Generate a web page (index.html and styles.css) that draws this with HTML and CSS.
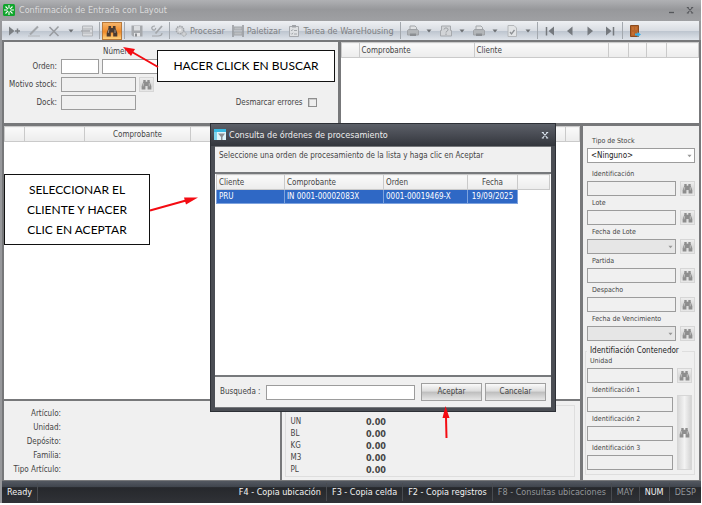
FILE: index.html
```html
<!DOCTYPE html>
<html lang="es">
<head>
<meta charset="utf-8">
<title>Confirmación de Entrada con Layout</title>
<link rel="stylesheet" href="styles.css">
</head>
<body>
<svg class="defs" aria-hidden="true">
  <symbol id="binoculars" viewBox="0 0 12 12"><path d="M2.5 1h2.6v2h1.8V1h2.6v2l1.8 5v3.5H7.2V7.500H4.800v4H.7V8l1.800-5z" fill="currentColor"/><path d="M2.900 4.500L2.300 8M9 4.500V8" stroke="#fff" stroke-opacity=".45" fill="none"/></symbol>
  <symbol id="printer" viewBox="0 0 12 12"><path d="M3 1h5l1.500 1.500V5H3z" fill="#e0e2e4" stroke="#a3a6aa"/><path d="M.5 5.500l1-1h9l1 1V10h-11z" fill="#b2b5b8" stroke="#a0a3a7"/><path d="M3 8.500h6V11H3z" fill="#8b8e92"/></symbol>
  <symbol id="caret" viewBox="0 0 6 4"><path d="M.5.5h5L3 3.500z" fill="currentColor"/></symbol>
</svg>
<div class="app">
  <header class="titlebar">
    <svg class="icon" viewBox="0 0 12 12"><rect width="12" height="12" rx="1.500" fill="#10a52c"/><path d="M6 1v3.500M6 7.500V11M1 6h3.500M7.500 6H11M2.500 2.500l2.300 2.300M7.200 7.200l2.300 2.300M9.500 2.500L7.200 4.800M4.800 7.200L2.500 9.500" stroke="#fff" stroke-width="1.100"/></svg>
    <h1>Confirmación de Entrada con Layout</h1>
    <button class="win" aria-label="Minimizar"><svg viewBox="0 0 8 8"><path d="M1 6.500h5" stroke="currentColor" stroke-width="1.300"/></svg></button>
    <button class="win" aria-label="Cerrar"><svg viewBox="0 0 8 8"><path d="M1.500 1.500l5 5.500M6.500 1.500l-5 5.500M.8 1.500h2M5.200 1.500h2M.8 7h2M5.200 7h2" stroke="currentColor" stroke-width="1.100"/></svg></button>
  </header>
  <nav class="toolbar" aria-label="Herramientas">
    <button aria-label="Nuevo"><svg class="icon" viewBox="0 0 12 12"><path d="M1 1.500L6.500 6 1 10.500z" fill="#7b7f83"/><path d="M7 6h5M9.500 3.500v5" stroke="#7b7f83" stroke-width="1.500"/></svg></button>
    <button aria-label="Editar"><svg class="icon" viewBox="0 0 12 12"><path d="M2 9.500L10 1.500" stroke="#a3a6aa" stroke-width="2"/><path d="M0 11h12" stroke="#b3b6ba"/></svg></button>
    <button aria-label="Eliminar"><svg class="icon" viewBox="0 0 12 12"><path d="M1.500 2l9 9M10.500 1.500l-9 9.500" stroke="#999ca0" stroke-width="1.500"/></svg></button>
    <button class="drop" aria-label="Opciones de eliminar"><svg><use href="#caret"/></svg></button>
    <button aria-label="Lista"><svg class="icon" viewBox="0 0 12 12"><path d="M1.500 1h10v10h-10z" fill="#d9dbde" stroke="#b0b3b7"/><path d="M1.500 4h10M1.500 8h10" stroke="#b0b3b7"/><path d="M0 6h9" stroke="#a6a9ad" stroke-width="1.500"/></svg></button>
    <span class="sep"></span>
    <button class="active" aria-label="Buscar"><svg class="icon"><use href="#binoculars"/></svg></button>
    <span class="sep"></span>
    <button aria-label="Guardar"><svg class="icon" viewBox="0 0 12 12"><path d="M.5.5h11v11H2l-1.500-1.500z" fill="#a5a8ac"/><path d="M3 1h6v4.500H3z" fill="#dcdee1"/><path d="M3 8h6v3.500H3z" fill="#e5e6e8"/><path d="M4 8.500h2v3H4z" fill="#8a8d91"/></svg></button>
    <button aria-label="Deshacer"><svg class="icon" viewBox="0 0 12 12"><path d="M4.500 8.500L11 1" stroke="#a3a6aa" stroke-width="1.800"/><path d="M4 1C1 1 0 3 1.500 4.500S5 4.500 4.500 3M1 11h6c3 0 4-1 4-3" stroke="#a3a6aa" fill="none" stroke-width="1.200"/></svg></button>
    <span class="sep"></span>
    <button class="text"><svg class="icon" viewBox="0 0 12 12"><circle cx="5" cy="5" r="3.700" fill="#cfd1d4" stroke="#a0a3a7" stroke-width="1.500" stroke-dasharray="1.500 .8"/><circle cx="5" cy="5" r="1.300" fill="#e7e8ea"/><circle cx="9" cy="9" r="2.200" fill="#cfd1d4" stroke="#a0a3a7" stroke-dasharray="1 .6"/></svg>Procesar</button>
    <button class="text"><svg class="icon" viewBox="0 0 12 12"><path d="M1 0v12M11 0v12" stroke="#94979b" stroke-width="1.500"/><path d="M2 2h8v3H2zM2 7h8v3H2z" fill="#bbbec1" stroke="#a3a6aa"/></svg>Paletizar</button>
    <button class="text"><svg class="icon" viewBox="0 0 12 12"><path d="M1.500 1.500h9v10h-9z" fill="#dfe1e3" stroke="#a6a9ad"/><path d="M4 0h4v2.500H4z" fill="#a0a3a7"/><path d="M3 5l.8.8L5 4.300M3 8.500l.8.8L5 7.800M6 5.500h3M6 9h3" stroke="#969a9e" stroke-width=".8" fill="none"/></svg>Tarea de WareHousing</button>
    <span class="sep"></span>
    <button aria-label="Imprimir"><svg class="icon"><use href="#printer"/></svg></button>
    <button class="drop" aria-label="Opciones de impresión"><svg><use href="#caret"/></svg></button>
    <button aria-label="Vista previa"><svg class="icon" viewBox="0 0 12 12"><path d="M1.500 1h9v4.500h1V11H.5V5.500h1z" fill="#d2d4d7" stroke="#a6a9ad"/><path d="M4 4.500c0-2 4-2 4 0S6 6 6 7.500M6 8.500V10" stroke="#999ca0" fill="none"/></svg></button>
    <button class="drop" aria-label="Opciones de vista previa"><svg><use href="#caret"/></svg></button>
    <button aria-label="Imprimir etiquetas"><svg class="icon"><use href="#printer"/></svg></button>
    <button class="drop" aria-label="Opciones de etiquetas"><svg><use href="#caret"/></svg></button>
    <button aria-label="Verificar"><svg class="icon" viewBox="0 0 12 12"><path d="M2 .5h6L10.500 3v8.500H2z" fill="#e2e4e6" stroke="#b4b7ba"/><path d="M4 7l1.500 2L8.500 5" stroke="#8e9195" stroke-width="1.300" fill="none"/></svg></button>
    <button class="drop" aria-label="Opciones de verificación"><svg><use href="#caret"/></svg></button>
    <span class="sep"></span>
    <button aria-label="Primero"><svg class="icon" viewBox="0 0 12 12"><path d="M2.500 2v8.500" stroke="#75797e" stroke-width="1.500"/><path d="M10 1.500v9L4.500 6z" fill="#75797e"/></svg></button>
    <button aria-label="Anterior"><svg class="icon" viewBox="0 0 12 12"><path d="M8.500 1.500v9L3 6z" fill="#75797e"/></svg></button>
    <button aria-label="Siguiente"><svg class="icon" viewBox="0 0 12 12"><path d="M3.500 1.500v9L9 6z" fill="#75797e"/></svg></button>
    <button aria-label="Último"><svg class="icon" viewBox="0 0 12 12"><path d="M9.500 2v8.500" stroke="#75797e" stroke-width="1.500"/><path d="M2 1.500v9L7.500 6z" fill="#75797e"/></svg></button>
    <span class="sep"></span>
    <button aria-label="Salir"><svg class="icon" viewBox="0 0 12 12"><path d="M1.500.5h8v11h-8z" fill="#b5652b" stroke="#8b4a1d"/><path d="M3 2h2v3H3zM6 2h2v3H6zM3 7h2v3H3z" fill="#c46f31"/><path d="M6 8.500h2.500V7L12 9.500 8.500 12v-1.500H6z" fill="#38aee8"/></svg></button>
  </nav>

  <main class="workspace">
    <div class="top">
      <form class="panel order">
        <span class="caption">Número</span>
        <label for="orden">Orden:</label>
        <span class="pair"><input id="orden"><input class="numero" aria-label="Número"></span>
        <label for="motivo">Motivo stock:</label>
        <span class="pair"><input id="motivo" class="off"><button type="button" class="find" aria-label="Buscar motivo"><svg class="icon"><use href="#binoculars"/></svg></button></span>
        <label for="dock">Dock:</label>
        <span class="pair"><input id="dock" class="off"><label class="check" for="errores">Desmarcar errores</label><input type="checkbox" id="errores"></span>
      </form>
      <section class="panel sheet">
        <table class="docs">
          <colgroup><col class="w-18"><col class="w-114"><col><col class="w-20"><col class="w-18"><col class="w-20"><col class="w-32"></colgroup>
          <thead><tr><th></th><th>Comprobante</th><th>Cliente</th><th></th><th></th><th></th><th></th></tr></thead>
        </table>
      </section>
    </div>
    <div class="bottom">
      <div class="left">
        <section class="panel sheet grow">
          <table class="lines">
            <colgroup><col class="w-20"><col class="w-60"><col class="w-106"><col><col class="w-14"></colgroup>
            <thead><tr><th></th><th></th><th>Comprobante</th><th></th><th></th></tr></thead>
          </table>
        </section>
        <div class="details">
          <section class="panel article"><p>Artículo:</p><p>Unidad:</p><p>Depósito:</p><p>Familia:</p><p>Tipo Artículo:</p></section>
          <section class="panel totals">
            <table>
              <tr><th>UN</th><td>0.00</td></tr>
              <tr><th>BL</th><td>0.00</td></tr>
              <tr><th>KG</th><td>0.00</td></tr>
              <tr><th>M3</th><td>0.00</td></tr>
              <tr><th>PL</th><td>0.00</td></tr>
            </table>
          </section>
        </div>
      </div>
      <aside class="panel filters">
        <div class="field wide"><label for="tipo">Tipo de Stock</label><span class="combo"><select id="tipo"><option>&lt;Ninguno&gt;</option></select><svg><use href="#caret"/></svg></span></div>
        <div class="field"><label for="ident">Identificación</label><input id="ident" class="off"><button class="find" aria-label="Buscar identificación"><svg class="icon"><use href="#binoculars"/></svg></button></div>
        <div class="field"><label for="lote">Lote</label><input id="lote" class="off"><button class="find" aria-label="Buscar lote"><svg class="icon"><use href="#binoculars"/></svg></button></div>
        <div class="field"><label for="flote">Fecha de Lote</label><span class="combo dim"><select id="flote"><option></option></select><svg><use href="#caret"/></svg></span><button class="find" aria-label="Buscar fecha de lote"><svg class="icon"><use href="#binoculars"/></svg></button></div>
        <div class="field"><label for="partida">Partida</label><input id="partida" class="off"><button class="find" aria-label="Buscar partida"><svg class="icon"><use href="#binoculars"/></svg></button></div>
        <div class="field"><label for="despacho">Despacho</label><input id="despacho" class="off"><button class="find" aria-label="Buscar despacho"><svg class="icon"><use href="#binoculars"/></svg></button></div>
        <div class="field"><label for="fvenc">Fecha de Vencimiento</label><span class="combo dim"><select id="fvenc"><option></option></select><svg><use href="#caret"/></svg></span><button class="find" aria-label="Buscar fecha de vencimiento"><svg class="icon"><use href="#binoculars"/></svg></button></div>
        <fieldset>
          <legend>Identifiación Contenedor</legend>
          <div class="field unit"><label for="unidad">Unidad</label><input id="unidad" class="off"><button class="find" aria-label="Buscar unidad"><svg class="icon"><use href="#binoculars"/></svg></button></div>
          <div class="ids">
            <div class="stack">
              <label for="id1">Identificación 1</label><input id="id1" class="off">
              <label for="id2">Identificación 2</label><input id="id2" class="off">
              <label for="id3">Identificación 3</label><input id="id3" class="off">
            </div>
            <button class="find tall" aria-label="Buscar contenedor"><svg class="icon"><use href="#binoculars"/></svg></button>
          </div>
        </fieldset>
      </aside>
    </div>
  </main>

  <footer class="status">
    <span class="ready">Ready</span>
    <span class="first">F4 - Copia ubicación</span><span>F3 - Copia celda</span><span>F2 - Copia registros</span><span class="mute">F8 - Consultas ubicaciones</span><span class="mute">MAY</span><span>NUM</span><span class="mute">DESP</span>
  </footer>

  <div class="dialog" role="dialog" aria-labelledby="dlg-title">
    <header>
      <svg class="icon" viewBox="0 0 12 12"><path d="M0 0h12v11H0z" fill="#dff4fa"/><path d="M0 0h12v3H0z" fill="#39b9e2"/><path d="M0 3h3v8H0z" fill="#7fd3ec"/><path d="M4 4.500h7L8.500 8v3H7V8z" fill="#8b8f93"/></svg>
      <h2 id="dlg-title">Consulta de órdenes de procesamiento</h2>
      <button class="win" aria-label="Cerrar consulta"><svg viewBox="0 0 8 8"><path d="M1.500 1.500l5 5.500M6.500 1.500l-5 5.500M.8 1.500h2M5.200 1.500h2M.8 7h2M5.200 7h2" stroke="currentColor" stroke-width="1.100"/></svg></button>
    </header>
    <div class="body">
      <p class="hint">Seleccione una orden de procesamiento de la lista y haga clic en Aceptar</p>
      <div class="list">
        <table>
          <colgroup><col class="w-68"><col class="w-99"><col class="w-84"><col class="w-50"><col></colgroup>
          <thead><tr><th>Cliente</th><th>Comprobante</th><th>Orden</th><th class="mid">Fecha</th><th></th></tr></thead>
          <tbody><tr><td>PRU</td><td>IN 0001-00002083X</td><td>0001-00019469-X</td><td class="mid">19/09/2025</td><td class="none"></td></tr></tbody>
        </table>
      </div>
      <form class="search">
        <label for="busqueda">Busqueda :</label><input id="busqueda">
        <button type="button">Aceptar</button><button type="button">Cancelar</button>
      </form>
    </div>
  </div>

  <div class="note note-search">HACER CLICK EN BUSCAR</div>
  <div class="note note-select">SELECCIONAR EL CLIENTE Y HACER CLIC EN ACEPTAR</div>
  <svg class="arrows" viewBox="0 0 702 505" aria-hidden="true">
    <g stroke="#f40b12" stroke-width="2"><path d="M158 67L132 52M150 210.500L186 200.500M446.500 438L446 417"/></g>
    <g fill="#f40b12"><path d="M123 47l12 2-4 7zM198 197.500l-12 7-2-7zM445.500 406l4 12h-7z"/></g>
  </svg>
</div>
</body>
</html>
```
FILE: styles.css
```css
* { box-sizing: border-box; }

body {
  margin: 0;
  background: #fff;
  color: #444;
  font: 8px/12px "DejaVu Sans Condensed", "Noto Sans", sans-serif;
}

button, input, select { font: inherit; color: inherit; margin: 0; padding: 0; border-radius: 0; }
h1, h2, p { margin: 0; font: inherit; }
table { border-collapse: collapse; }
.defs { position: absolute; width: 0; height: 0; }
.icon { width: 12px; height: 12px; flex: none; display: block; }

.app {
  position: relative;
  display: flex;
  flex-direction: column;
  min-height: calc(100vh - 2px);
  margin-right: 1px;
  background: #97989b;
}

/* Title bar */
.titlebar {
  display: flex;
  align-items: center;
  gap: 4px;
  height: 21px;
  padding: 0 4px 2px 3px;
  background: linear-gradient(#b0b1b4, #97989b 45%, #9fa0a3);
  color: #dcdcdc;
  font-size: 9px;
}
.titlebar h1 { flex: 1; }
.win { width: 14px; height: 12px; border: 0; background: none; color: #55575b; display: grid; place-items: center; }
.win svg { width: 8px; height: 8px; }

/* Toolbar */
.toolbar {
  display: flex;
  align-items: center;
  height: 19px;
  margin: 0 2px;
  padding-left: 2px;
  background: linear-gradient(#eef0f3, #d9dde3 50%, #bcc4ce 52%, #dfe4ea);
  color: #7e8184;
  font-size: 9px;
}
.toolbar button { display: flex; align-items: center; justify-content: center; width: 20px; height: 18px; border: 0; background: none; white-space: nowrap; }
.toolbar button.text { width: auto; gap: 3px; padding: 0 4px 0 3px; }
.toolbar button.drop { width: 13px; }
.drop svg { width: 6px; height: 4px; color: #6d7074; }
.toolbar button.active { background: linear-gradient(#f6b56a, #f08a2a 55%, #ffd27c); border: 1px solid #b9793a; color: #4a3a30; }
.sep { width: 1px; height: 17px; margin: 0 2px; background: #a3a8ae; }

/* Work area */
.workspace { flex: 1; display: flex; flex-direction: column; gap: 3px; margin: 0 0 0 2px; padding: 2px 2px 1px; background: #77787a; }
.panel { background: #f0f0f0; }
.top { display: flex; gap: 3px; }
.order {
  flex: 0 0 48%;
  display: grid;
  grid-template-columns: 53px 1fr;
  column-gap: 4px;
  row-gap: 3px;
  align-content: start;
  align-items: center;
  padding: 6px 7px 13px 0;
}
.order > label { text-align: right; }
.caption { grid-column: 2; padding-left: 42px; line-height: 8px; }
.pair { display: flex; align-items: center; gap: 3px; }
input:not([type]), select { height: 15px; border: 1px solid #9c9c9c; background: #fff; outline: 0; min-width: 0; }
input.off:not([type]) { background: #f0f0f0; }
#orden { width: 38px; }
.numero { width: 56px; }
#motivo, #dock { width: 75px; }
.check { margin-left: auto; }
input[type=checkbox] { width: 9px; height: 9px; appearance: none; background: #eee; border: 1px solid #8e8e8e; box-shadow: inset 1px 1px #ccc; margin: 0 14px 0 2px; }
.find { width: 15px; height: 15px; border: 1px solid #d6d6d6; background: linear-gradient(#eee, #d8d8d8 55%, #e8e8e8); color: #8e8e8e; display: grid; place-items: center; }
.find .icon { width: 11px; height: 11px; }

.sheet { background: #fff; flex: 1; min-width: 0; }
.sheet table, .list table { width: 100%; table-layout: fixed; }
.sheet th, .list th { height: 15px; padding: 1px 2px 0; text-align: left; font-weight: normal; line-height: 12px; background: linear-gradient(#fafafa, #ececec); border: 1px solid #cacaca; }
.sheet .lines th { text-align: center; }
.w-14 { width: 14px; }
.w-18 { width: 18px; }
.w-20 { width: 20px; }
.w-32 { width: 32px; }
.w-50 { width: 50px; }
.w-60 { width: 60px; }
.w-68 { width: 68px; }
.w-84 { width: 84px; }
.w-99 { width: 99px; }
.w-106 { width: 106px; }
.w-114 { width: 115px; }

.bottom { flex: 1; display: flex; gap: 3px; }
.left { flex: 1; display: flex; flex-direction: column; gap: 2px; }
.details { display: flex; gap: 2px; }
.article { flex: 0 0 48%; padding: 6px 0 2px; }
.article p { width: 57px; line-height: 14px; text-align: right; }
.totals { flex: 1; padding: 4px 5px 3px 3px; }
.totals table { width: 100%; border: 1px solid #dedede; }
.totals th { width: 60px; padding: 0 0 0 4px; text-align: left; font-weight: normal; line-height: 12px; }
.totals tr:first-child > * { padding-top: 10px; }
.totals td { padding: 0 0 0 20px; font-weight: bold; font-size: 9px; line-height: 12px; }

/* Filters */
.filters { flex: 0 0 116px; padding: 10px 4px 4px; font-size: 7px; }
.field { display: grid; grid-template-columns: 1fr 15px; column-gap: 4px; }
.field label, .stack label { grid-column: 1 / -1; padding-left: 5px; line-height: 10px; margin: 2px 0; }
.field.wide { grid-template-columns: 1fr; margin-bottom: 4px; }
.field.wide label { margin-top: 0; }
.field.wide select { font-size: 8px; color: #222; }
.field input, .stack input { width: 100%; }
.combo { position: relative; display: flex; }
.combo select { width: 100%; appearance: none; padding-left: 3px; }
.combo svg { position: absolute; right: 3px; top: 6px; width: 5px; height: 4px; color: #999; }
.combo.dim select { background: #e6e6e6; }
fieldset { min-width: 0; margin: 5px 0 0 -2px; padding: 0 2px 4px 1px; border: 1px solid #dedede; }
legend { padding: 0 3px; font-size: 8px; line-height: 10px; color: #1e1e1e; }
.field.unit label { padding-left: 3px; margin-top: 0; }
.ids { display: grid; grid-template-columns: 1fr 15px; column-gap: 4px; }
.stack { display: grid; }
.find.tall { height: auto; margin-top: 12px; background: linear-gradient(90deg, #d8d8d8, #f3f3f3 50%, #d4d4d4); }

/* Status bar */
.status { display: flex; height: 22px; margin-left: 2px; align-items: center; background: linear-gradient(#535861, #40454d 27%, #26282c 30%, #303237); color: #f2f2f2; font-size: 9px; white-space: nowrap; }
.status span { padding: 0 5px; line-height: 18px; border-left: 1px solid #484b50; }
.status .ready { margin-right: auto; border: 0; border-right: 1px solid #484b50; }
.status .first { border: 0; }
.status .mute { color: #93969a; }

/* Dialog */
.dialog { position: absolute; left: 210px; top: 123px; width: 346px; padding: 0 4px 3px; background: #4b4e54; border: 1px solid #2d3036; }
.dialog header { display: flex; align-items: center; gap: 3px; height: 22px; margin: 0 -4px; padding: 0 3px; background: linear-gradient(#5c6068, #4a4d55 45%, #33363c); color: #ededed; font-size: 9px; }
.dialog h2 { flex: 1; }
.dialog .win { color: #dde6f0; }
.body { display: flex; flex-direction: column; gap: 2px; border-top: 1px solid #77797c; border-bottom: 1px solid #77797c; background: #77797c; }
.hint { padding: 3px 4px 10px; background: #f0f0f0; }
.list { height: 201px; padding: 0 1px; background: #fff; }
.list td { height: 14px; padding: 0 2px; line-height: 12px; background: #2f68c5; border: 1px solid #7ea3de; color: #fff; white-space: nowrap; }
.list td.none { background: none; border: 0; }
.list .mid { text-align: center; }
.search { display: flex; align-items: center; gap: 3px; padding: 6px 5px; background: #f0f0f0; }
.search input { flex: 1; margin: 0 3px 0 2px; }
.search button { width: 61px; height: 18px; border: 1px solid #a0a0a0; background: linear-gradient(#fafafa, #dcdcdc 45%, #bdbdbd 50%, #e6e6e6); }

/* Callouts */
.note { position: absolute; display: grid; place-items: center; background: #fff; border: 1px solid #111; color: #000; font: 12px/20px Lato, sans-serif; text-align: center; }
.note-search { left: 157px; top: 50px; width: 178px; height: 32px; }
.note-select { left: 4px; top: 174px; width: 146px; height: 71px; padding: 0 20px; }
.arrows { position: absolute; left: 0; top: 0; width: 702px; height: 505px; pointer-events: none; }
```
